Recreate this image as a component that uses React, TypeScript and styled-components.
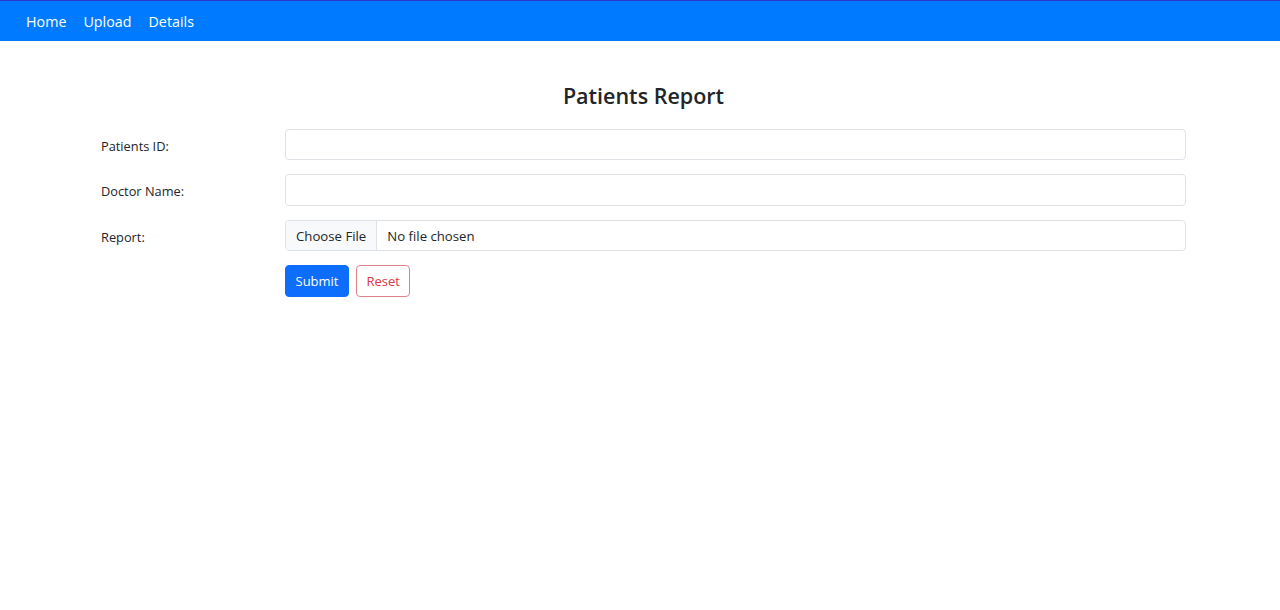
import React from "react";
import styled, { createGlobalStyle } from "styled-components";

const Global = createGlobalStyle`
  html, body { margin: 0; padding: 0; background: #fff; }
  body {
    font-family: "Open Sans", "Noto Sans", "Liberation Sans", sans-serif;
    color: #212529;
    -webkit-font-smoothing: antialiased;
  }
  * { box-sizing: border-box; }
`;

const NavBar = styled.nav`
  height: 41px;
  background: #007bff;
  border-top: 1px solid #2c36c9;
  display: flex;
  align-items: center;
  padding-left: 17.5px;
`;

const NavLink = styled.a`
  color: #fff;
  font-size: 14.3px;
  padding: 0 8.5px;
  text-decoration: none;
  line-height: 24px;
  margin-top: 1px;
`;

const Main = styled.main`
  padding: 40px 94px 0 101px;
`;

const Title = styled.h4`
  margin: 0 0 19px;
  text-align: center;
  font-size: 21.5px;
  font-weight: 600;
  line-height: 29px;
`;

const Form = styled.form`
  display: flex;
  flex-direction: column;
  gap: 14.5px;
`;

const Row = styled.div`
  display: flex;
  align-items: center;
  height: 31px;
`;

const Label = styled.label`
  width: 184px;
  flex: none;
  font-size: 12.8px;
  padding-top: 2px;
`;

const Control = styled.div`
  flex: 1;
  display: flex;
  gap: 7px;
`;

const TextInput = styled.input`
  width: 100%;
  height: 31.5px;
  border: 1px solid #dee2e6;
  border-radius: 4px;
  padding: 4px 8px;
  font: inherit;
  font-size: 14px;
  outline: none;
`;

const FileInput = styled.input`
  width: 100%;
  height: 31.5px;
  border: 1px solid #dee2e6;
  border-radius: 4px;
  padding: 4px 8px;
  font-family: inherit;
  font-size: 13.2px;
  color: #212529;
  overflow: hidden;
  &::file-selector-button {
    height: 31.5px;
    padding: 4px 10px;
    margin: -5px 10px -5px -8px;
    border: 0;
    border-right: 1px solid #dee2e6;
    border-radius: 0;
    background: #f8f9fa;
    color: #212529;
    font: inherit;
  }
`;

const Button = styled.button<{ $variant: "primary" | "danger" }>`
  height: 31.5px;
  padding: 0 9.5px;
  font-family: inherit;
  font-size: 13px;
  border-radius: 4px;
  border: 1px solid ${(p) => (p.$variant === "primary" ? "#0d6efd" : "#e0828c")};
  background: ${(p) => (p.$variant === "primary" ? "#0d6efd" : "#fff")};
  color: ${(p) => (p.$variant === "primary" ? "#fff" : "#dc3545")};
`;

export default function App() {
  return (
    <>
      <Global />
      <NavBar>
        <NavLink href="#">Home</NavLink>
        <NavLink href="#">Upload</NavLink>
        <NavLink href="#">Details</NavLink>
      </NavBar>
      <Main>
        <Title>Patients Report</Title>
        <Form onSubmit={(e) => e.preventDefault()}>
          <Row>
            <Label htmlFor="pid">Patients ID:</Label>
            <Control>
              <TextInput id="pid" type="text" />
            </Control>
          </Row>
          <Row>
            <Label htmlFor="doc">Doctor Name:</Label>
            <Control>
              <TextInput id="doc" type="text" />
            </Control>
          </Row>
          <Row>
            <Label htmlFor="rep">Report:</Label>
            <Control>
              <FileInput id="rep" type="file" />
            </Control>
          </Row>
          <Row>
            <Label as="span" />
            <Control>
              <Button type="submit" $variant="primary">Submit</Button>
              <Button type="reset" $variant="danger">Reset</Button>
            </Control>
          </Row>
        </Form>
      </Main>
    </>
  );
}
